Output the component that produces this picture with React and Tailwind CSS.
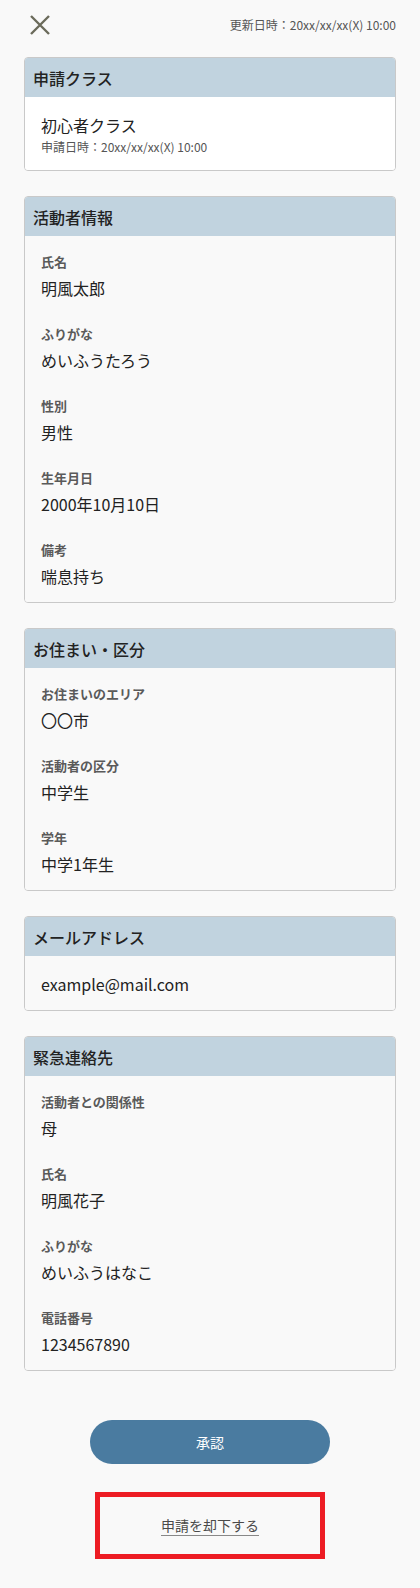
const font = { fontFamily: '"Noto Sans CJK JP", "Noto Sans", sans-serif' };

const sections = [
  {
    title: "活動者情報",
    items: [
      ["氏名", "明風太郎"],
      ["ふりがな", "めいふうたろう"],
      ["性別", "男性"],
      ["生年月日", "2000年10月10日"],
      ["備考", "喘息持ち"],
    ],
  },
  {
    title: "お住まい・区分",
    items: [
      ["お住まいのエリア", "〇〇市"],
      ["活動者の区分", "中学生"],
      ["学年", "中学1年生"],
    ],
  },
];

const emergency = [
  ["活動者との関係性", "母"],
  ["氏名", "明風花子"],
  ["ふりがな", "めいふうはなこ"],
  ["電話番号", "1234567890"],
];

function Card({ title, white, children }) {
  return (
    <div className="border border-[#c9c9c9] rounded-[4px] overflow-hidden">
      <div className="bg-[#c1d3df] h-[39px] flex items-center px-2 text-[16px] leading-6 font-medium text-[#222]">
        {title}
      </div>
      <div className={white ? "bg-white px-4 pt-4 pb-[14px]" : "bg-[#f9f9f9] px-4 pt-4 pb-[14px]"}>
        {children}
      </div>
    </div>
  );
}

function Items({ items }) {
  return (
    <div className="flex flex-col gap-6">
      {items.map(([label, value], i) => (
        <div key={i} className="flex flex-col">
          <div className="text-[13px] leading-5 font-bold text-[#5a5a5a]">{label}</div>
          <div className="mt-1 text-[16px] leading-6 text-[#222]">{value}</div>
        </div>
      ))}
    </div>
  );
}

export default function App() {
  return (
    <div className="min-h-[1588px] bg-[#f9f9f9] pb-[29px]" style={font}>
      <div className="h-[49px] flex items-center justify-between pl-[29px] pr-6">
        <svg width="22" height="22" viewBox="0 0 22 22">
          <path d="M2 2 L20 20 M20 2 L2 20" stroke="#6b6b5b" strokeWidth="2.4" />
        </svg>
        <span className="text-[12px] text-[#555]">更新日時：20xx/xx/xx(X) 10:00</span>
      </div>

      <div className="mx-6 mt-2 flex flex-col gap-[25px]">
        <Card title="申請クラス" white>
          <div className="text-[16px] leading-6 text-[#222]">初心者クラス</div>
          <div className="mt-px text-[12px] leading-[18px] text-[#555]">申請日時：20xx/xx/xx(X) 10:00</div>
        </Card>

        {sections.map((s) => (
          <Card key={s.title} title={s.title}>
            <Items items={s.items} />
          </Card>
        ))}

        <Card title="メールアドレス">
          <div className="text-[16px] leading-6 text-[#222]">example@mail.com</div>
        </Card>

        <Card title="緊急連絡先">
          <Items items={emergency} />
        </Card>
      </div>

      <div className="flex flex-col items-center mt-[49px]">
        <button className="w-[240px] h-[44px] rounded-full bg-[#4a7ba0] text-white text-[14px]">
          承認
        </button>
        <div className="mt-7 w-[230px] h-[67px] border-[5px] border-[#ed1c24] flex items-center justify-center">
          <span className="text-[14px] text-[#4a4a4a] underline underline-offset-4 decoration-[#888]">
            申請を却下する
          </span>
        </div>
      </div>
    </div>
  );
}
